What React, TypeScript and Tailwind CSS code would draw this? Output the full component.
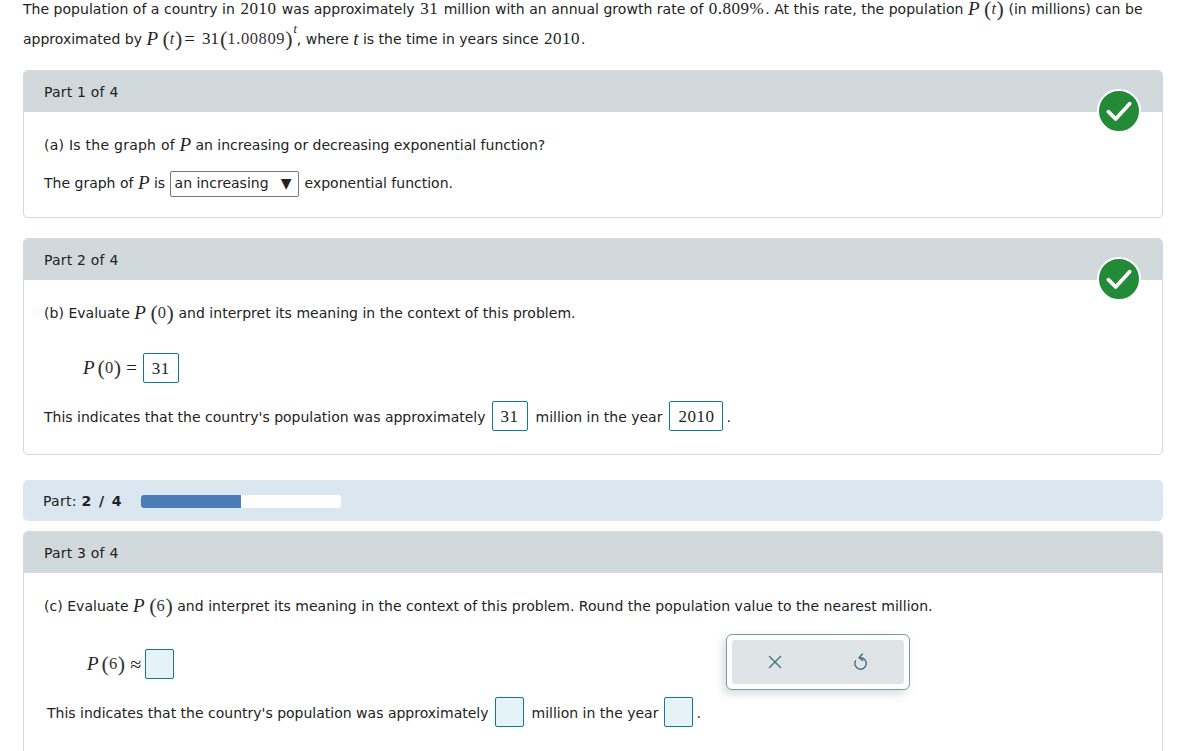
import { ReactNode } from "react";
import { X } from "lucide-react";

const serif = "font-['Liberation_Serif',serif]";

function M({ children, className = "" }: { children: ReactNode; className?: string }) {
  return <span className={`${serif} mx-px text-[17px] tracking-[0.5px] text-[#222] ${className}`}>{children}</span>;
}

function I({ children }: { children: ReactNode }) {
  return <i className={`${serif} text-[19px] text-[#222]`}>{children}</i>;
}

function Paren({ children }: { children: ReactNode }) {
  return (
    <span className={`${serif} flex items-center text-[#333]`}>
      <span className="text-[22px] leading-[16px] font-light">(</span>
      <span className="text-[16.5px] tracking-[0.6px]">{children}</span>
      <span className="text-[22px] leading-[16px] font-light">)</span>
    </span>
  );
}

function Box({ value, className = "" }: { value?: string; className?: string }) {
  return (
    <span
      className={`${serif} inline-flex h-[30px] items-center justify-center rounded-[2px] border border-[#0e7c93] pt-[2px] text-[17px] tracking-[0.5px] text-[#222] ${
        value ? "bg-white" : "bg-[#e5f3f8]"
      } ${className}`}
    >
      {value}
    </span>
  );
}

function Check() {
  return (
    <span className="absolute top-[18px] right-[21px] flex size-[44px] items-center justify-center rounded-full border-2 border-white bg-[#238b38]">
      <svg viewBox="0 0 24 24" className="size-[32px]" fill="none" stroke="white" strokeWidth="2.8" strokeLinecap="round" strokeLinejoin="round">
        <path d="M4 12.5l5.5 5.5L20 6.5" />
      </svg>
    </span>
  );
}

function ResetIcon() {
  return (
    <svg viewBox="0 0 14 18" className="h-[18px] w-[14px]" fill="none" stroke="currentColor" strokeWidth="1.4" strokeLinecap="round" strokeLinejoin="round">
      <path d="M6.5 4.8a5.7 5.7 0 1 1-5 3" />
      <path d="M8.5 1L5 4.6l3.6 2.8" />
    </svg>
  );
}

function Card({ title, done, className = "", children }: { title: string; done?: boolean; className?: string; children: ReactNode }) {
  return (
    <section className={`relative rounded-[5px] border border-[#d1d9dc] ${className}`}>
      <div className="flex h-[41px] items-center rounded-t-[4px] bg-[#d1d9dc] px-5 pt-[2px] text-[14px] tracking-[0.2px]">{title}</div>
      {done ? <Check /> : null}
      {children}
    </section>
  );
}

export default function App() {
  return (
    <div className="relative h-[751px] w-[1184px] overflow-hidden bg-white font-['DejaVu_Sans',sans-serif] text-[14px] text-[#222]">
      <div className="pr-[21px] pl-[23px]">
        <p className="-mt-[6px] flex h-[30px] items-center tracking-[0.025px] whitespace-nowrap">
          The population of a country in&nbsp;<M>2010</M>&nbsp;was approximately&nbsp;<M>31</M>&nbsp;million with an annual growth rate of&nbsp;
          <M>0.809%</M>. At this rate, the population&nbsp;<I>P</I>&nbsp;<Paren><i>t</i></Paren>&nbsp;(in millions) can be
        </p>
        <p className="flex h-[30px] items-center whitespace-nowrap">
          approximated by&nbsp;<I>P</I>&nbsp;<Paren><i>t</i></Paren>
          <M className="ml-[2px] text-[19px] tracking-normal">=</M>
          <M className="ml-[6px] tracking-normal">31</M>
          <Paren>1.00809</Paren>
          <sup className={`${serif} -mt-2 ml-px text-[12px] italic`}>t</sup>, where&nbsp;<I>t</I>&nbsp;is the time in years since&nbsp;<M>2010</M>.
        </p>

        <Card title="Part 1 of 4" done className="mt-[16px] h-[148px]">
          <p className="mt-[18px] flex h-[30px] items-center px-5">
            <span className="tracking-[0.25px]">(a) Is the graph of</span>&nbsp;<I>P</I>&nbsp;an increasing or decreasing exponential function?
          </p>
          <p className="mt-2 flex h-[30px] items-center px-5">
            The graph of&nbsp;<I>P</I>&nbsp;is&nbsp;
            <span className="mt-px flex h-[26px] w-[129px] items-center justify-between rounded-[2px] border border-[#777] pr-[6px] pl-1">
              an increasing <span className="text-[14px]">▼</span>
            </span>
            <span className="ml-[6px]">exponential function.</span>
          </p>
        </Card>

        <Card title="Part 2 of 4" done className="mt-5 h-[217px]">
          <p className="mt-[18px] flex h-[30px] items-center px-5 tracking-[0.03px]">
            (b) Evaluate&nbsp;<I>P</I>&nbsp;<Paren>0</Paren>&nbsp;and interpret its meaning in the context of this problem.
          </p>
          <div className="mt-[25px] flex items-center pl-[59px]">
            <I>P</I>
            <span className="ml-[3px]"><Paren>0</Paren></span>
            <M className="ml-[5px] text-[19px] tracking-normal">=</M>
            <Box value="31" className="ml-[5px] w-[36px]" />
          </div>
          <p className="mt-[18px] flex h-[30px] items-center px-5">
            <span className="mt-[2px]">This indicates that the country's population was approximately</span>
            <Box value="31" className="ml-[6px] w-[36px]" />
            <span className="mt-[2px] ml-[8px]">million in the year</span>
            <Box value="2010" className="ml-[7px] w-[54px]" />
            <span className="mt-[2px] ml-[3px]">.</span>
          </p>
        </Card>

        <div className="mt-[25px] flex h-[41px] items-center rounded-[5px] bg-[#dae6f0] px-5 pt-px">
          <span className="tracking-[0.3px]">
            Part: <b className="tracking-[1.4px]">2 / 4</b>
          </span>
          <div className="ml-[18px] h-[13px] w-[200px] overflow-hidden rounded-[3px] bg-white">
            <div className="h-full w-[100px] bg-[#4a7db7]" />
          </div>
        </div>

        <Card title="Part 3 of 4" className="mt-[10px] h-[300px]">
          <p className="mt-[18px] flex h-[30px] items-center px-5 tracking-[0.03px]">
            (c) Evaluate&nbsp;<I>P</I>&nbsp;<Paren>6</Paren>&nbsp;and interpret its meaning in the context of this problem. Round the population value to the nearest million.
          </p>
          <div className="mt-[28px] flex items-center pl-[63px]">
            <I>P</I>
            <span className="ml-[3px]"><Paren>6</Paren></span>
            <M className="ml-[5px] text-[20px] tracking-normal">≈</M>
            <Box className="ml-[3px] w-[29px]" />
          </div>
          <p className="mt-[18px] flex h-[30px] items-center pr-5 pl-[23px]">
            <span className="mt-[2px]">This indicates that the country's population was approximately</span>
            <Box className="ml-[6px] w-[29px]" />
            <span className="mt-[2px] ml-[8px]">million in the year</span>
            <Box className="ml-[6px] w-[29px]" />
            <span className="mt-[2px] ml-[3px]">.</span>
          </p>
        </Card>
      </div>

      <div className="absolute top-[634px] left-[726px] flex h-[56px] w-[184px] rounded-[6px] border border-[#7d9aa4] bg-white p-[5px] shadow-[-3px_4px_8px_rgba(90,120,130,0.25)]">
        <div className="flex flex-1 items-center rounded-[3px] bg-[#dfe5e7] text-[#49707f]">
          <span className="flex flex-1 justify-center"><X size={22} strokeWidth={1.5} /></span>
          <span className="flex flex-1 justify-center"><ResetIcon /></span>
        </div>
      </div>
    </div>
  );
}
